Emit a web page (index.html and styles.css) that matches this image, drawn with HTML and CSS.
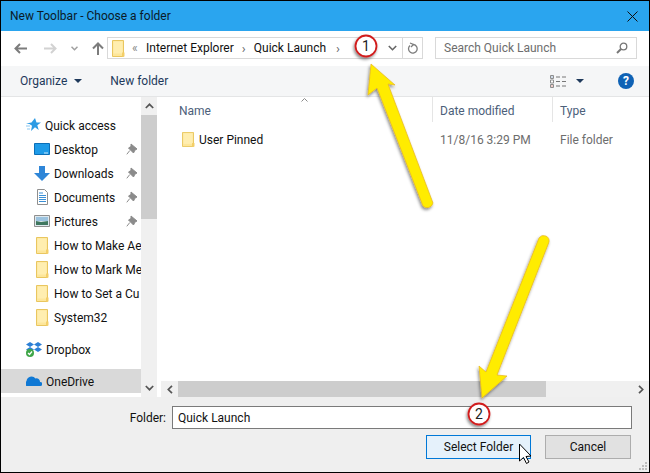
FILE: index.html
```html
<!DOCTYPE html>
<html lang="en">
<head>
  <meta charset="UTF-8" />
  <title>New Toolbar - Choose a folder</title>
  <link rel="stylesheet" href="styles.css">
</head>
<body>

<svg class="defs" width="0" height="0">
  <symbol id="folder" viewBox="0 0 13 17">
    <path d="M.5.5h11v16H.5z" fill="#fde69a" stroke="#e9c65f"/>
    <path d="M1.500 1.500h9v12h-9z" fill="#ffeeb0"/>
    <path d="M10 12.500h2.500v4H10z" fill="#f4cf68"/>
  </symbol>
  <symbol id="pin" viewBox="0 0 12 12">
    <path d="M5 1l6 5-2 1-1.500 3L2.500 5l2.500-1.500zM3.800 7.500L.8 11.300" fill="#8b8b8b" stroke="#8b8b8b"/>
  </symbol>
</svg>

<div class="dialog">
  <header class="titlebar">
    <span class="title">New Toolbar - Choose a folder</span>
    <svg class="close" width="11" height="11" viewBox="0 0 11 11"><path d="M.5.500l10 10M10.500.500l-10 10" stroke="#111" fill="none"/></svg>
  </header>

  <div class="navbar">
    <div class="nav-buttons">
      <svg class="nav-icon" width="13" height="11" viewBox="0 0 13 11"><path d="M6 1L1.500 5.500 6 10M2 5.500h11" stroke="#7c7c7c" stroke-width="2" fill="none"/></svg>
      <svg class="nav-icon nav-fwd" width="13" height="11" viewBox="0 0 13 11"><path d="M7 1l4.500 4.500L7 10M11 5.500H0" stroke="#d2d2d2" stroke-width="2" fill="none"/></svg>
      <svg class="nav-icon nav-down" width="7" height="5" viewBox="0 0 7 5"><path d="M.5.800l3 3 3-3" stroke="#a0a0a0" stroke-width="1.500" fill="none"/></svg>
      <svg class="nav-icon nav-up" width="12" height="13" viewBox="0 0 12 13"><path d="M1 6.500L6 1.500l5 5M6 2v11" stroke="#7c7c7c" stroke-width="2" fill="none"/></svg>
    </div>
    <div class="address">
      <svg class="address-folder" width="13" height="17"><use href="#folder"/></svg>
      <span class="crumb-more">&laquo;</span>
      <span class="crumb">Internet Explorer</span>
      <span class="crumb-sep">&rsaquo;</span>
      <span class="crumb">Quick Launch</span>
      <span class="crumb-sep crumb-sep-last">&rsaquo;</span>
      <svg class="address-drop" width="9" height="6" viewBox="0 0 9 6"><path d="M.8 1l3.700 3.700L8.200 1" stroke="#666" stroke-width="1.600" fill="none"/></svg>
      <div class="refresh">
        <svg width="11" height="13" viewBox="0 0 11 13"><path d="M6.500 2.500a4.300 4.300 0 1 1-3.500 1M3 1l3.500 1.500L4 5" stroke="#7c7c7c" stroke-width="1.300" fill="none"/></svg>
      </div>
    </div>
    <div class="search">
      <span>Search Quick Launch</span>
      <svg width="12" height="12" viewBox="0 0 12 12"><circle cx="7.500" cy="4.500" r="3.300" stroke="#777" stroke-width="1.300" fill="none"/><path d="M5 7l-4 4" stroke="#777" stroke-width="2"/></svg>
    </div>
  </div>

  <div class="toolbar">
    <span class="tool">Organize</span>
    <span class="caret caret-organize"></span>
    <span class="tool tool-new">New folder</span>
    <svg class="view-icon" width="17" height="13" viewBox="0 0 17 13">
      <path d="M.5.500h3v3h-3zM.5 5h3v3h-3zM.5 9.500h3v3h-3z" fill="#fff" stroke="#8d8d8d"/>
      <path d="M1.500 2h1" stroke="#3a6ea5"/><path d="M1.500 11h1" stroke="#c0392b"/>
      <path d="M6 2h4M12 2h4M6 6.500h4M12 6.500h4M6 11h4M12 11h4" stroke="#777"/>
    </svg>
    <span class="caret caret-view"></span>
    <span class="help">?</span>
  </div>

  <div class="content">
    <aside class="sidebar">
      <ul class="tree">
        <li class="tree-item top">
          <svg width="15" height="14" viewBox="0 0 15 14"><path d="M9 0l1.500 4.500H15l-3.700 2.800 1.400 4.700L9 9.200 5 13l1-5.200L3.500 6 0 5.500l5.500-1z" fill="#2c9be4"/><path d="M0 8h4M1 11h3" stroke="#8cc8f0"/></svg>
          <span class="top-name">Quick access</span>
        </li>
        <li class="tree-item child">
          <svg class="item-icon" width="16" height="12" viewBox="0 0 16 12"><path d="M.5.500h15v11H.5z" fill="#1e9be8" stroke="#0b6fb8"/><path d="M10 10h4" stroke="#cde8fa"/></svg>
          <span class="item-name">Desktop</span>
          <svg class="pin" width="12" height="12"><use href="#pin"/></svg>
        </li>
        <li class="tree-item child">
          <svg class="item-icon" width="16" height="15" viewBox="0 0 16 15"><path d="M5 0h6v7h5l-8 8-8-8h5z" fill="#2f86d8"/></svg>
          <span class="item-name">Downloads</span>
          <svg class="pin" width="12" height="12"><use href="#pin"/></svg>
        </li>
        <li class="tree-item child">
          <svg class="item-icon" width="16" height="16" viewBox="0 0 16 16"><path d="M3.500.500h7l3 3v12h-10z" fill="#fff" stroke="#8f8f8f"/><path d="M5 4h4M5 6.500h7M5 8.500h7M5 10.500h7M5 12.500h7" stroke="#3a8fd6"/></svg>
          <span class="item-name">Documents</span>
          <svg class="pin" width="12" height="12"><use href="#pin"/></svg>
        </li>
        <li class="tree-item child">
          <svg class="item-icon" width="16" height="12" viewBox="0 0 16 12"><path d="M.5.500h15v11H.5z" fill="#dfe9ee" stroke="#8f8f8f"/><path d="M2 2h12v4H2z" fill="#9cc3df"/><path d="M2 6l5 1 7-1v4H2z" fill="#3f7760"/></svg>
          <span class="item-name">Pictures</span>
          <svg class="pin" width="12" height="12"><use href="#pin"/></svg>
        </li>
        <li class="tree-item child">
          <svg class="item-icon" width="13" height="17"><use href="#folder"/></svg>
          <span class="item-name">How to Make Ae</span>
        </li>
        <li class="tree-item child">
          <svg class="item-icon" width="13" height="17"><use href="#folder"/></svg>
          <span class="item-name">How to Mark Me</span>
        </li>
        <li class="tree-item child">
          <svg class="item-icon" width="13" height="17"><use href="#folder"/></svg>
          <span class="item-name">How to Set a Cu</span>
        </li>
        <li class="tree-item child">
          <svg class="item-icon" width="13" height="17"><use href="#folder"/></svg>
          <span class="item-name">System32</span>
        </li>
        <li class="tree-item top group">
          <svg width="16" height="16" viewBox="0 0 16 16"><path d="M4 1l4 2.500L4 6 0 3.500zM12 1l4 2.500L12 6 8 3.500zM4 6l4 2.500L4 11 0 8.500zM12 6l4 2.500L12 11 8 8.500z" fill="#2c7fd6"/><circle cx="4" cy="12" r="4" fill="#3fa648"/><path d="M2 12l1.500 1.500L6 10.500" stroke="#fff" stroke-width="1.200" fill="none"/></svg>
          <span class="top-name">Dropbox</span>
        </li>
        <li class="tree-item top group selected">
          <svg width="16" height="10" viewBox="0 0 16 10"><path d="M1 10a2.500 2.500 0 0 1-.5-4.800A5 5 0 0 1 9.500 2.500 3.500 3.500 0 0 1 14 6a2 2 0 0 1 .5 4z" fill="#0f78d4"/></svg>
          <span class="top-name">OneDrive</span>
        </li>
      </ul>
      <div class="vscroll">
        <svg class="scroll-arrow" width="9" height="6" viewBox="0 0 9 6"><path d="M.8 5l3.700-3.700L8.200 5" stroke="#555" stroke-width="1.700" fill="none"/></svg>
        <div class="vscroll-track"><div class="vscroll-thumb"></div></div>
        <svg class="scroll-arrow" width="9" height="6" viewBox="0 0 9 6"><path d="M.8 1l3.700 3.700L8.200 1" stroke="#555" stroke-width="1.700" fill="none"/></svg>
      </div>
    </aside>

    <main class="files">
      <div class="file-head">
        <div class="col col-name">
          <span>Name</span>
          <svg class="sort" width="7" height="4" viewBox="0 0 7 4"><path d="M.5 3.500l3-3 3 3" stroke="#8a8a8a" fill="none"/></svg>
        </div>
        <div class="col col-date">Date modified</div>
        <div class="col col-type">Type</div>
      </div>
      <div class="file-row">
        <div class="cell col-name">
          <svg width="13" height="15" viewBox="0 0 13 17" preserveAspectRatio="none"><use href="#folder"/></svg>
          <span class="file-name">User Pinned</span>
        </div>
        <div class="cell col-date">11/8/16 3:29 PM</div>
        <div class="cell col-type">File folder</div>
      </div>
      <div class="hscroll">
        <div class="hscroll-btn"><svg width="6" height="9" viewBox="0 0 6 9"><path d="M5 .8L1.300 4.500 5 8.200" stroke="#555" stroke-width="1.700" fill="none"/></svg></div>
        <div class="hscroll-track"><div class="hscroll-thumb"></div></div>
        <div class="hscroll-btn"><svg width="6" height="9" viewBox="0 0 6 9"><path d="M1 .8l3.700 3.700L1 8.200" stroke="#555" stroke-width="1.700" fill="none"/></svg></div>
      </div>
    </main>
  </div>

  <footer class="footer">
    <div class="folder-row">
      <label class="folder-label">Folder:</label>
      <div class="folder-input">Quick Launch</div>
    </div>
    <div class="button-row">
      <div class="btn btn-primary">Select Folder</div>
      <div class="btn">Cancel</div>
    </div>
    <svg class="grip" width="9" height="9" viewBox="0 0 9 9"><path d="M6 0h2v2H6zM3 3h2v2H3zM6 3h2v2H6zM0 6h2v2H0zM3 6h2v2H3zM6 6h2v2H6z" fill="#bdbdbd"/></svg>
  </footer>

  <!-- annotations drawn on top of the screenshot -->
  <svg class="overlay" width="650" height="473" viewBox="0 0 650 473">
    <defs>
      <filter id="shadow" x="-30%" y="-30%" width="160%" height="160%">
        <feDropShadow dx="-1" dy="2" stdDeviation="1.500" flood-color="#000" flood-opacity=".45"/>
      </filter>
    </defs>
    <g filter="url(#shadow)">
      <path d="M371 64L368 95 377 88 423 206A6 6 0 0 0 433 203L388 84 395 85z" fill="#ffec00" stroke="#e6b422" stroke-width=".7"/>
      <path d="M482 398L507 376 497 375 549 242A5.500 5.500 0 0 0 539 238L486 372 479 366z" fill="#ffec00" stroke="#e6b422" stroke-width=".7"/>
    </g>
    <g filter="url(#shadow)">
      <circle cx="366" cy="46" r="10.500" fill="#fff" stroke="#d11f1f" stroke-width="1.800"/>
      <circle cx="479" cy="414" r="10.500" fill="#fff" stroke="#d11f1f" stroke-width="1.800"/>
    </g>
    <text class="badge-num" x="366" y="51">1</text>
    <text class="badge-num" x="479" y="419">2</text>
    <path d="M519.500 444V461L523.500 457.500 526.500 463.500 529 462 526 456.500 531 456z" fill="#fff" stroke="#000"/>
  </svg>
</div>

</body>
</html>
```

FILE: styles.css
```css
* { margin:0; padding:0; box-sizing:border-box; font-family:Roboto,"Noto Sans",sans-serif; }
body { background:#fff; }
.defs { position:absolute; }

.dialog { position:relative; width:650px; height:473px; border:1px solid #000; display:flex; flex-direction:column; font-size:12px; color:#111; background:#fff; overflow:hidden; }

.titlebar { flex:none; height:30px; background:#2aa5ef; display:flex; align-items:center; justify-content:space-between; padding:0 11px 0 9px; }
.title { font-size:12px; color:#0a1a28; }

/* address row */
.navbar { flex:none; height:35px; display:flex; align-items:center; padding:0 12px 1px 0; }
.nav-buttons { width:106px; display:flex; align-items:center; padding-left:13px; }
.nav-fwd { margin-left:17px; }
.nav-down { margin-left:14px; }
.nav-up { margin-left:14px; }

.address { width:316px; height:22px; border:1px solid #d9d9d9; display:flex; align-items:center; padding-left:4px; }
.address-folder { margin-right:7px; }
.crumb-more { color:#888; width:14px; font-size:12px; }
.crumb { color:#111; }
.crumb-sep { color:#666; width:20px; text-align:center; font-size:13px; }
.crumb-sep-last { width:24px; }
.address-drop { margin-left:auto; margin-right:5px; }
.refresh { width:20px; height:20px; border-left:1px solid #d9d9d9; display:flex; align-items:center; justify-content:center; }

.search { width:202px; height:22px; margin-left:12px; border:1px solid #d9d9d9; display:flex; align-items:center; justify-content:space-between; padding:0 8px 0 8px; color:#6d6d6d; }

/* command bar */
.toolbar { flex:none; height:31px; background:#f5f6f7; border-bottom:1px solid #e4e5e6; display:flex; align-items:center; padding-left:19px; }
.tool { color:#1e395b; }
.caret { width:0; height:0; border-style:solid; border-width:4px 4px 0; border-color:#1e395b transparent transparent; }
.caret-organize { margin-left:7px; }
.tool-new { margin-left:28px; }
.view-icon { margin-left:auto; }
.caret-view { margin-left:9px; }
.help { width:16px; height:16px; margin:0 15px 0 34px; border-radius:50%; background:#0f62b5; color:#fff; font-weight:bold; font-size:12px; line-height:16px; text-align:center; }

.content { flex:none; height:300px; display:flex; }

/* left tree */
.sidebar { flex:none; width:156px; display:flex; }
.tree { width:140px; list-style:none; padding-top:16px; overflow:hidden; }
.tree-item { height:24px; display:flex; align-items:center; white-space:nowrap; color:#111; }
.tree-item.top { padding-left:25px; gap:4px; }
.tree-item.group { margin-top:8px; }
.tree-item.selected { background:#d9d9d9; }
.tree-item.child { padding-left:33px; position:relative; }
.top-name { margin-top:2px; }
.item-icon { position:absolute; left:33px; }
.item-icon[width="13"] { left:35px; }
.item-name { margin-left:20px; margin-top:2px; }
.pin { position:absolute; left:125px; }

.vscroll { width:16px; background:#f0f0f0; display:flex; flex-direction:column; align-items:center; }
.scroll-arrow { flex:none; margin:6px 0; }
.vscroll-track { flex:1; width:100%; }
.vscroll-thumb { height:104px; background:#cdcdcd; }

/* file list */
.files { flex:1; min-width:0; margin-left:4px; display:flex; flex-direction:column; }
.file-head { height:25px; display:flex; color:#4c607a; }
.col { display:flex; align-items:center; height:100%; padding-top:2px; position:relative; }
.col-name { width:271px; padding-left:18px; }
.col-date { width:120px; padding-left:7px; }
.col-type { flex:1; padding-left:7px; }
.file-head .col-date, .file-head .col-type { border-left:1px solid #e5e5e5; }
.sort { position:absolute; left:140px; top:1px; }

.file-row { height:34px; display:flex; color:#6d6d6d; }
.cell { display:flex; align-items:center; padding-top:1px; }
.file-row .col-name { color:#111; padding-left:21px; }
.file-row .col-date, .file-row .col-type { padding-left:8px; }
.file-name { margin-left:4px; }

.hscroll { margin-top:auto; height:16px; background:#f0f0f0; display:flex; }
.hscroll-btn { flex:none; width:17px; display:flex; align-items:center; justify-content:center; }
.hscroll-track { flex:1; }
.hscroll-thumb { width:368px; height:100%; background:#cdcdcd; }

/* bottom of dialog */
.footer { flex:1; background:#efefef; position:relative; padding-top:9px; }
.folder-row { display:flex; align-items:center; }
.folder-label { width:165px; text-align:right; color:#111; }
.folder-input { width:460px; height:23px; margin-left:6px; border:1px solid #7a7a7a; background:#fff; padding-left:5px; line-height:22px; color:#111; }
.button-row { display:flex; justify-content:flex-end; gap:14px; margin-top:6px; padding-right:18px; }
.btn { width:86px; height:24px; background:#e1e1e1; border:1px solid #adadad; text-align:center; line-height:23px; color:#111; }
.btn-primary { width:105px; background:#e5f1fb; border-color:#0078d7; }
.grip { position:absolute; right:1px; bottom:1px; }

.overlay { position:absolute; left:-1px; top:-1px; pointer-events:none; }
.badge-num { font-size:14px; fill:#222; text-anchor:middle; }
```
